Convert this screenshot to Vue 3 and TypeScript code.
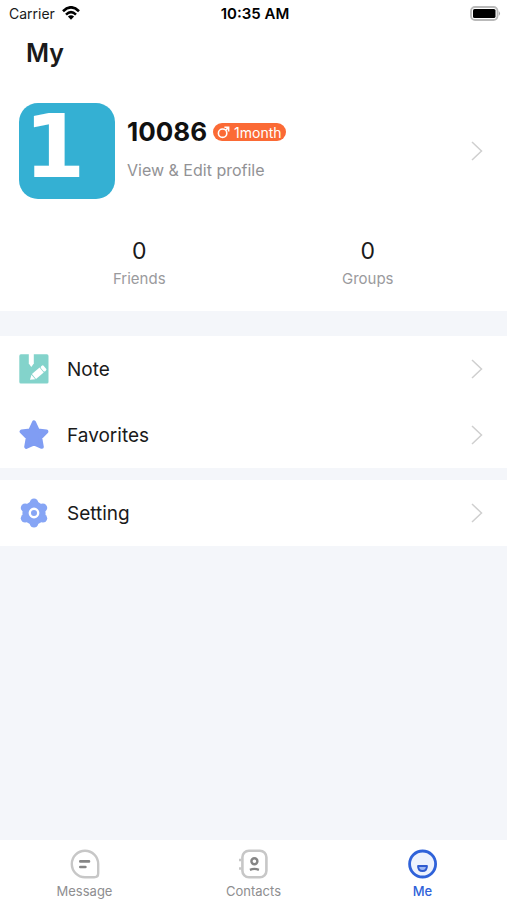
<script setup lang="ts">
import { ref } from 'vue'

interface MenuItem {
  id: string
  label: string
}

const stats = [
  { label: 'Friends', count: 0 },
  { label: 'Groups', count: 0 },
]

const menuGroups: MenuItem[][] = [
  [
    { id: 'note', label: 'Note' },
    { id: 'favorites', label: 'Favorites' },
  ],
  [{ id: 'setting', label: 'Setting' }],
]

const tabs: MenuItem[] = [
  { id: 'message', label: 'Message' },
  { id: 'contacts', label: 'Contacts' },
  { id: 'me', label: 'Me' },
]

const activeTab = ref('me')
</script>

<template>
  <div class="screen">
    <div class="top">
      <div class="status">
        <div class="carrier">
          <span>Carrier</span>
          <svg width="18" height="14" viewBox="0 0 18 14" fill="none" stroke="#000" stroke-width="2.6">
            <path d="M1 5.2Q9 -2.6 17 5.2" />
            <path d="M4 8.6Q9 3.8 14 8.6" />
            <path d="M9 13.8L5.9 10.5Q9 8 12.1 10.5Z" fill="#000" stroke="none" />
          </svg>
        </div>
        <time class="clock">10:35 AM</time>
        <svg class="battery" width="31" height="15" viewBox="0 0 31 15">
          <rect x="1" y="1" width="26.5" height="13" rx="4" fill="#fff" stroke="#b9b9b9" stroke-width="1.8" />
          <rect x="3" y="3" width="22.5" height="9" rx="1.6" fill="#000" />
          <path d="M28.8 5Q31.2 7.5 28.8 10Z" fill="#a5a5a5" />
        </svg>
      </div>
      <h1 class="title">My</h1>
      <button class="profile" type="button">
        <span class="avatar">1</span>
        <span class="info">
          <span class="name-row">
            <span class="name">10086</span>
            <span class="badge">
              <svg width="13" height="13" viewBox="0 0 13 13" fill="none" stroke="#fff" stroke-width="1.6">
                <circle cx="5.6" cy="7.2" r="4.2" />
                <path d="M8.5 4.3L11.2 1.6M7.4 1.3H11.6V5.4" />
              </svg>
              1month
            </span>
          </span>
          <span class="hint">View &amp; Edit profile</span>
        </span>
        <svg class="chevron" width="12" height="20" viewBox="0 0 12 20"><path d="M1 1L10.5 10L1 19" /></svg>
      </button>
      <div class="stats">
        <button v-for="s in stats" :key="s.label" class="stat" type="button">
          <span class="count">{{ s.count }}</span>
          <span class="stat-label">{{ s.label }}</span>
        </button>
      </div>
    </div>

    <main class="menu">
      <div v-for="(group, i) in menuGroups" :key="i" class="group">
        <button v-for="item in group" :key="item.id" class="row" type="button">
          <svg v-if="item.id === 'note'" width="30" height="30" viewBox="0 0 30 30">
            <rect x="0.3" y="0.3" width="29.2" height="29.2" rx="1.6" fill="#83d3cb" />
            <path d="M9.8 0H14.8V9.6L12.3 13L9.8 9.6Z" fill="#fff" />
            <g transform="translate(11 25.8) rotate(-40)" fill="#fff">
              <path d="M0 0L4.4 -3V3Z" />
              <rect x="5.2" y="-3.2" width="10" height="6.4" />
              <rect x="15.9" y="-3.2" width="3.6" height="6.4" rx="1.4" />
            </g>
          </svg>
          <svg v-else-if="item.id === 'favorites'" width="30" height="30" viewBox="0 0 30 30">
            <path
              d="M15 2.4L18.7 10.4L27.4 11.6L21.2 17.7L22.8 26.8L15 23.4L7.2 26.8L8.8 17.7L2.6 11.6L11.3 10.4Z"
              fill="#809df3" stroke="#809df3" stroke-width="4" stroke-linejoin="round"
            />
          </svg>
          <svg v-else width="30" height="30" viewBox="0 0 30 30">
            <g fill="#86a5f5">
              <circle cx="15" cy="15" r="11.6" />
              <circle cx="15" cy="4.8" r="4.3" />
              <circle cx="23.9" cy="9.8" r="4.3" />
              <circle cx="23.9" cy="20.2" r="4.3" />
              <circle cx="15" cy="25.2" r="4.3" />
              <circle cx="6.1" cy="20.2" r="4.3" />
              <circle cx="6.1" cy="9.8" r="4.3" />
            </g>
            <circle cx="15" cy="15" r="4.2" fill="none" stroke="#fff" stroke-width="2.4" />
          </svg>
          <span class="row-label">{{ item.label }}</span>
          <svg class="chevron" width="12" height="20" viewBox="0 0 12 20"><path d="M1 1L10.5 10L1 19" /></svg>
        </button>
      </div>
    </main>

    <nav class="tabs">
      <button
        v-for="tab in tabs"
        :key="tab.id"
        class="tab"
        :class="{ active: tab.id === activeTab }"
        type="button"
        @click="activeTab = tab.id"
      >
        <svg v-if="tab.id === 'message'" width="30" height="30" viewBox="0 0 30 30" fill="none">
          <path d="M15 1.8A13.2 13.2 0 0 1 28.2 15V24.2Q28.2 28.2 24.2 28.2H15A13.2 13.2 0 0 1 15 1.8Z" stroke="#c7c7c7" stroke-width="2.4" />
          <path d="M10.3 12.4H19M10.3 18H15.4" stroke="#858585" stroke-width="2.6" stroke-linecap="round" />
        </svg>
        <svg v-else-if="tab.id === 'contacts'" width="30" height="30" viewBox="0 0 30 30" fill="none">
          <rect x="3.4" y="1.8" width="24" height="26.4" rx="6.5" stroke="#c7c7c7" stroke-width="2.6" />
          <path d="M0 11H2.4M0 19.5H2.4" stroke="#c7c7c7" stroke-width="2.6" />
          <circle cx="15.4" cy="12.3" r="3" stroke="#858585" stroke-width="2.4" />
          <path d="M10.9 20.8Q15.4 19 19.9 20.8" stroke="#858585" stroke-width="2.4" />
        </svg>
        <svg v-else width="30" height="30" viewBox="0 0 30 30">
          <circle cx="14.6" cy="15" r="13" fill="#edf2fd" stroke="#2f62d9" stroke-width="2.8" />
          <path d="M10.1 17.1H18.9Q19 21.9 14.5 21.9Q10 21.9 10.1 17.1Z" fill="#9db7f3" stroke="#2f5bd0" stroke-width="2" stroke-linejoin="round" />
        </svg>
        <span>{{ tab.label }}</span>
      </button>
    </nav>
  </div>
</template>

<style>
body {
  margin: 0;
  background: #f4f6fa;
}
</style>

<style scoped>
.screen {
  display: flex;
  flex-direction: column;
  min-height: 100vh;
  font-family: Inter, "Liberation Sans", sans-serif;
  color: #1a1a1a;
  background: #f4f6fa;
}

button {
  display: flex;
  margin: 0;
  padding: 0;
  border: 0;
  background: none;
  font: inherit;
  color: inherit;
  cursor: pointer;
}

svg {
  display: block;
  flex: none;
}

.top {
  background: #fff;
}

.status {
  display: grid;
  grid-template-columns: 1fr auto 1fr;
  align-items: center;
  height: 26px;
  padding: 0 6px 0 9px;
  font-size: 14px;
}

.carrier {
  display: flex;
  align-items: center;
  gap: 7px;
}

.clock {
  font-size: 15px;
  font-weight: 600;
  color: #000;
}

.battery {
  justify-self: end;
}

.title {
  margin: 0;
  padding: 10px 26px 0;
  font-size: 25px;
  line-height: 34px;
  font-weight: 600;
}

.profile {
  align-items: center;
  width: 100%;
  padding: 33px 24px 0 19px;
  text-align: left;
}

.avatar {
  box-sizing: border-box;
  flex: none;
  width: 96px;
  height: 96px;
  padding-left: 5px;
  border-radius: 19px;
  background: #34b0d3;
  color: #fff;
  font-family: "DejaVu Sans", sans-serif;
  font-weight: 700;
  font-size: 88px;
  line-height: 88px;
}

.info {
  display: flex;
  flex: 1;
  flex-direction: column;
  gap: 12px;
  padding: 0 0 6px 12px;
}

.name-row {
  display: flex;
  align-items: center;
  gap: 6px;
}

.name {
  font-size: 26px;
  line-height: 32px;
  font-weight: 700;
  color: #111;
}

.badge {
  display: flex;
  align-items: center;
  gap: 4px;
  height: 18px;
  padding: 0 4px;
  border-radius: 9px;
  background: #fb6a35;
  color: #fff;
  font-size: 14px;
}

.hint {
  font-size: 16px;
  line-height: 20px;
  color: #929295;
}

.chevron {
  fill: none;
  stroke: #cfcfcf;
  stroke-width: 1.5;
}

.stats {
  display: flex;
  padding: 36px 25px 22px;
}

.stat {
  flex: 1;
  flex-direction: column;
  align-items: center;
  gap: 2px;
}

.count {
  font-size: 23px;
  line-height: 32px;
}

.stat-label {
  font-size: 15px;
  line-height: 20px;
  color: #9a9a9d;
}

.menu {
  display: flex;
  flex: 1;
  flex-direction: column;
  gap: 12px;
  padding: 25px 0;
}

.group {
  background: #fff;
}

.row {
  align-items: center;
  width: 100%;
  height: 66px;
  padding: 0 24px 0 19px;
  text-align: left;
}

.row-label {
  flex: 1;
  padding-left: 18px;
  font-size: 19px;
}

.tabs {
  display: flex;
  height: 60px;
  background: #fff;
}

.tab {
  flex: 1;
  flex-direction: column;
  align-items: center;
  gap: 4px;
  padding-top: 9px;
  font-size: 13px;
  line-height: 16px;
  color: #8e8e90;
}

.tab.active {
  color: #2f62d9;
  font-weight: 500;
}
</style>
